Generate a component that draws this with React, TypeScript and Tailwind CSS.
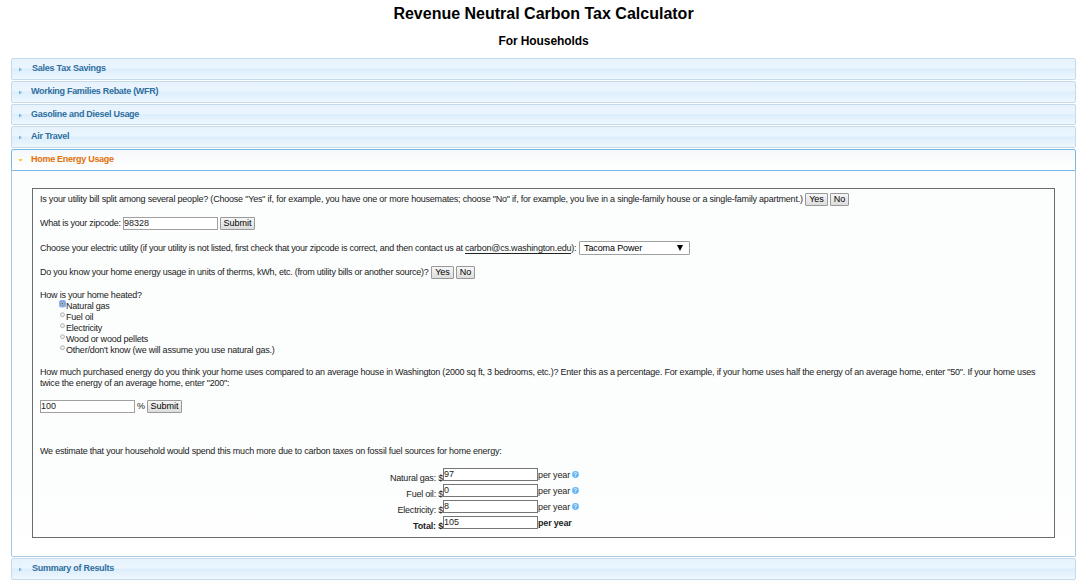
import React from "react";

type HeaderProps = { title: string; height?: string; indent?: string; tracking?: string };

function Header({ title, height = "h-[22px]", indent = "pl-[9px]", tracking = "tracking-[-0.28px]" }: HeaderProps) {
  return (
    <div
      className={`flex ${height} items-start rounded-[2px] border border-[#c5dbec] bg-[linear-gradient(#e6f2fc_0%,#ebf5fe_45%,#dceefb_50%,#eef7fe_100%)] pl-[7px]`}
    >
      <svg className="mt-[8px] h-[5px] w-[3px] shrink-0" viewBox="0 0 3 5">
        <path d="M0 0.4L3 2.5L0 4.6Z" fill="#78b4e0" />
      </svg>
      <span className={`${indent} ${tracking} text-[9px] leading-[18px] font-bold text-[#2e6e9e]`}>{title}</span>
    </div>
  );
}

function Button({ children, width }: { children: React.ReactNode; width: string }) {
  return (
    <button
      className={`${width} h-[13px] shrink-0 rounded-[1px] border border-[#999] bg-linear-to-b from-[#f6f6f6] to-[#dddddd] text-center text-[9px] leading-[11px] tracking-normal whitespace-nowrap text-black`}
    >
      {children}
    </button>
  );
}

function Field({ value, dark = false }: { value: string; dark?: boolean }) {
  return (
    <input
      defaultValue={value}
      className={`block h-[13px] w-[95px] shrink-0 border bg-white pb-[2px] text-[9px] leading-[9px] font-normal tracking-normal text-[#222] ${dark ? "border-[#767676]" : "border-[#a0a0a0]"}`}
    />
  );
}

function Radio({ label, checked = false }: { label: string; checked?: boolean }) {
  return (
    <label className="flex h-[11px] pl-[19px]">
      <svg className="h-[9px] w-[8px] shrink-0" viewBox="0 0 8 9">
        {checked && <rect x="0" y="0" width="7" height="7.5" rx="2" fill="#8fb4ec" />}
        <circle cx="3.5" cy="3.7" r="2" fill={checked ? "#dce6f5" : "#eeeeee"} stroke={checked ? "#6686b5" : "#a5a5a5"} strokeWidth="0.8" />
        {checked && <circle cx="3.5" cy="3.7" r="0.9" fill="#555" />}
      </svg>
      <span className="-ml-px leading-[13px]">{label}</span>
    </label>
  );
}

function Help() {
  return (
    <svg className="ml-[2px] h-[7px] w-[7px]" viewBox="0 0 7 7">
      <circle cx="3.5" cy="3.5" r="3.4" fill="#6ab8f4" />
      <path d="M2.4 2.5Q2.6 1.5 3.6 1.5Q4.6 1.7 4.5 2.5Q4.4 3.2 3.5 3.5V4.2M3.5 4.8V5.6" fill="none" stroke="#fff" strokeWidth="0.8" />
    </svg>
  );
}

function Result({ label, value, total = false }: { label: string; value: string; total?: boolean }) {
  return (
    <div className={`flex h-[16px] ${total ? "font-bold tracking-[-0.18px]" : ""}`}>
      <span className="w-[410px] pt-[4px] text-right leading-[12px]">{label}</span>
      <Field value={value} dark />
      <span className={`leading-[14px] ${total ? "" : "tracking-[-0.12px]"}`}>per year</span>
      {!total && (
        <div className="pt-[3px]">
          <Help />
        </div>
      )}
    </div>
  );
}

export default function App() {
  return (
    <main className="flex h-[587px] w-[1085px] flex-col overflow-hidden bg-white pr-[9px] pl-[11px] font-['Liberation_Sans',Arial,sans-serif] text-[9px] whitespace-nowrap text-[#222]">
      <h1 className="mt-[4px] h-[20px] text-center text-[16px] leading-[20px] font-bold text-black">
        Revenue Neutral Carbon Tax Calculator
      </h1>
      <h2 className="mt-[9px] h-[16px] text-center text-[12px] leading-[16px] font-bold tracking-[-0.1px] text-black">
        For Households
      </h2>

      <div className="mt-[9px] flex flex-col gap-px">
        <Header title="Sales Tax Savings" indent="pl-[10px]" tracking="tracking-[-0.24px]" />
        <Header title="Working Families Rebate (WFR)" tracking="tracking-[-0.3px]" />
        <Header title="Gasoline and Diesel Usage" height="h-[21px]" />
        <Header title="Air Travel" />
        <section>
          <div className="flex h-[22px] items-start rounded-t-[2px] border border-[#79b7e7] bg-linear-to-b from-[#f5f8f9] to-white pl-[6px]">
            <svg className="mt-[9px] h-[3px] w-[5px]" viewBox="0 0 5 3">
              <path d="M0.3 0.3H4.7L2.5 2.6Z" fill="#f9bd01" />
            </svg>
            <span className="pl-[8px] text-[9px] leading-[18px] font-bold tracking-[-0.28px] text-[#e17009]">Home Energy Usage</span>
          </div>
          <div className="h-[386px] rounded-b-[2px] border border-t-0 border-[#a6c9e2] bg-linear-to-b from-[#fcfdfd] via-[#fcfdfd] via-80% to-white px-[20px] pt-[17px] tracking-[-0.217px]">
            <div className="flex h-[350px] flex-col border border-[#6b6b6b] pt-[4px] pl-[7px]">
              <div className="flex h-[24px]">
                <span className="w-[765px] leading-[13px] tracking-[-0.209px]">
                  Is your utility bill split among several people? (Choose "Yes" if, for example, you have one or more housemates; choose "No" if, for example, you live in a single-family house or a single-family apartment.)
                </span>
                <Button width="w-[23px]">Yes</Button>
                <span className="w-[2px]" />
                <Button width="w-[19px]">No</Button>
              </div>
              <div className="flex h-[24px]">
                <span className="w-[83px] leading-[13px] tracking-[-0.25px]">What is your zipcode:</span>
                <Field value="98328" />
                <span className="w-[2px]" />
                <Button width="w-[35px]">Submit</Button>
              </div>
              <div className="flex h-[25px]">
                <span className="w-[539px] leading-[14px] tracking-[-0.256px]">
                  Choose your electric utility (if your utility is not listed, first check that your zipcode is correct, and then contact us at{" "}
                  <a className="border-b border-[#222] tracking-[-0.2px] text-[#222]">carbon@cs.washington.edu</a>):
                </span>
                <div className="flex h-[14px] w-[111px] items-center justify-between rounded-[1px] border border-[#a0a0a0] bg-white pr-[6px] pl-[4px] text-black">
                  <span className="leading-[12px] tracking-[-0.12px]">Tacoma Power</span>
                  <svg className="h-[6px] w-[6px]" viewBox="0 0 6 6">
                    <path d="M0 0H6L3 6Z" fill="#000" />
                  </svg>
                </div>
              </div>
              <div className="flex h-[23px]">
                <span className="w-[391px] leading-[13px] tracking-[-0.237px]">
                  Do you know your home energy usage in units of therms, kWh, etc. (from utility bills or another source)?
                </span>
                <Button width="w-[23px]">Yes</Button>
                <span className="w-[2px]" />
                <Button width="w-[19px]">No</Button>
              </div>
              <div className="h-[77px]">
                <p className="h-[11px] leading-[13px]">How is your home heated?</p>
                <Radio label="Natural gas" checked />
                <Radio label="Fuel oil" />
                <Radio label="Electricity" />
                <Radio label="Wood or wood pellets" />
                <Radio label="Other/don't know (we will assume you use natural gas.)" />
              </div>
              <p className="h-[34px] pt-px leading-[11px]">
                How much purchased energy do you think your home uses compared to an average house in Washington (2000 sq ft, 3 bedrooms, etc.)? Enter this as a percentage. For example, if your home uses half the energy of an average home, enter "50". If your home uses
                <br />
                twice the energy of an average home, enter "200":
              </p>
              <div className="flex h-[45px]">
                <Field value="100" />
                <span className="w-[12px] pl-[2px] leading-[13px]">%</span>
                <Button width="w-[35px]">Submit</Button>
              </div>
              <p className="h-[23px] leading-[13px]">
                We estimate that your household would spend this much more due to carbon taxes on fossil fuel sources for home energy:
              </p>
              <div className="-ml-[7px]">
                <Result label="Natural gas: $" value="97" />
                <Result label="Fuel oil: $" value="0" />
                <Result label="Electricity: $" value="8" />
                <Result label="Total: $" value="105" total />
              </div>
            </div>
          </div>
        </section>
        <Header title="Summary of Results" indent="pl-[10px]" />
      </div>
    </main>
  );
}
